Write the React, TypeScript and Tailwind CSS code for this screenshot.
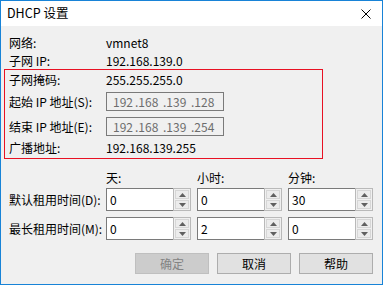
import React from 'react';

const font = "font-['Noto_Sans_CJK_SC','Noto_Sans',sans-serif]";

function IpBox({ value }: { value: string }) {
  const parts = value.split('.');
  return (
    <div className="flex h-[19px] w-[118px] items-center border border-[#7a7a7a] bg-[#f0f0f0] pl-[6px] text-[12px] text-[#6d6d6d]">
      {parts.map((p, i) => (
        <span key={i} className={i === 0 ? 'w-[22px]' : 'w-[28px]'}>
          {i > 0 ? '.' + p : p}
        </span>
      ))}
    </div>
  );
}

function SpinBox({ value }: { value: string }) {
  return (
    <div className="flex h-[23px] w-[85px]">
      <div className="flex flex-1 items-center border border-r-0 border-[#7a7a7a] bg-white pl-[3px] text-[12px] text-black">
        {value}
      </div>
      <div className="flex w-[18px] flex-col gap-[1px] border border-[#b9b9b9] bg-[#f0f0f0] p-[1px]">
        <div className="flex flex-1 items-center justify-center border border-[#d6d6d6] bg-[#ececec]">
          <svg width="7" height="4" viewBox="0 0 7 4"><path d="M3.5 0L7 4H0z" fill="#606060" /></svg>
        </div>
        <div className="flex flex-1 items-center justify-center border border-[#d6d6d6] bg-[#ececec]">
          <svg width="7" height="4" viewBox="0 0 7 4"><path d="M0 0h7L3.5 4z" fill="#606060" /></svg>
        </div>
      </div>
    </div>
  );
}

function Row({ label, children, h = 'h-[18px]' }: { label: string; children: React.ReactNode; h?: string }) {
  return (
    <div className={`flex items-center ${h}`}>
      <div className="w-[97px] shrink-0">{label}</div>
      {children}
    </div>
  );
}

export default function App() {
  return (
    <div className={`flex h-[285px] w-[383px] flex-col border border-[#1883d7] bg-[#f0f0f0] text-[12px] leading-none text-black ${font}`}>
      {/* title bar */}
      <div className="flex h-[25px] shrink-0 items-center justify-between bg-white pl-[6px] pr-[11px]">
        <span className="text-[12.5px]">DHCP 设置</span>
        <svg width="10" height="10" viewBox="0 0 10 10">
          <path d="M0.5 0.5L9.5 9.5M9.5 0.5L0.5 9.5" stroke="#000" strokeWidth="1" />
        </svg>
      </div>

      <div className="flex flex-col pt-[8px]">
        <div className="flex flex-col pl-[8px]">
          <Row label="网络:">vmnet8</Row>
          <Row label="子网 IP:">192.168.139.0</Row>
        </div>

        {/* highlighted block */}
        <div className="ml-[3px] mt-[-1px] flex w-[319px] flex-col border border-[#e81123] pl-[4px]">
          <Row label="子网掩码:" h="h-[20px]">255.255.255.0</Row>
          <div className="mt-[2px] flex items-center">
            <div className="w-[97px] shrink-0">起始 IP 地址(S):</div>
            <IpBox value="192.168.139.128" />
          </div>
          <div className="mt-[6px] flex items-center">
            <div className="w-[97px] shrink-0">结束 IP 地址(E):</div>
            <IpBox value="192.168.139.254" />
          </div>
          <Row label="广播地址:" h="mt-[2px] h-[20px]">192.168.139.255</Row>
        </div>

        {/* lease times */}
        <div className="mt-[10px] grid grid-cols-[91px_85px_85px_85px] gap-x-[6px] pl-[8px]">
          <div />
          <div className="flex h-[18px] items-center">天:</div>
          <div className="flex h-[18px] items-center">小时:</div>
          <div className="flex h-[18px] items-center">分钟:</div>

          <div className="mt-[1px] flex items-center whitespace-nowrap">默认租用时间(D):</div>
          <div className="mt-[1px]"><SpinBox value="0" /></div>
          <div className="mt-[1px]"><SpinBox value="0" /></div>
          <div className="mt-[1px]"><SpinBox value="30" /></div>

          <div className="mt-[6px] flex items-center whitespace-nowrap">最长租用时间(M):</div>
          <div className="mt-[6px]"><SpinBox value="0" /></div>
          <div className="mt-[6px]"><SpinBox value="2" /></div>
          <div className="mt-[6px]"><SpinBox value="0" /></div>
        </div>

        {/* buttons */}
        <div className="mt-[13px] flex justify-end gap-[8px] pr-[9px]">
          <button className="h-[21px] w-[74px] border border-[#bfbfbf] bg-[#cccccc] text-[12px] text-[#838383]">确定</button>
          <button className="h-[21px] w-[74px] border border-[#adadad] bg-[#e1e1e1] text-[12px]">取消</button>
          <button className="h-[21px] w-[74px] border border-[#adadad] bg-[#e1e1e1] text-[12px]">帮助</button>
        </div>
      </div>
    </div>
  );
}
